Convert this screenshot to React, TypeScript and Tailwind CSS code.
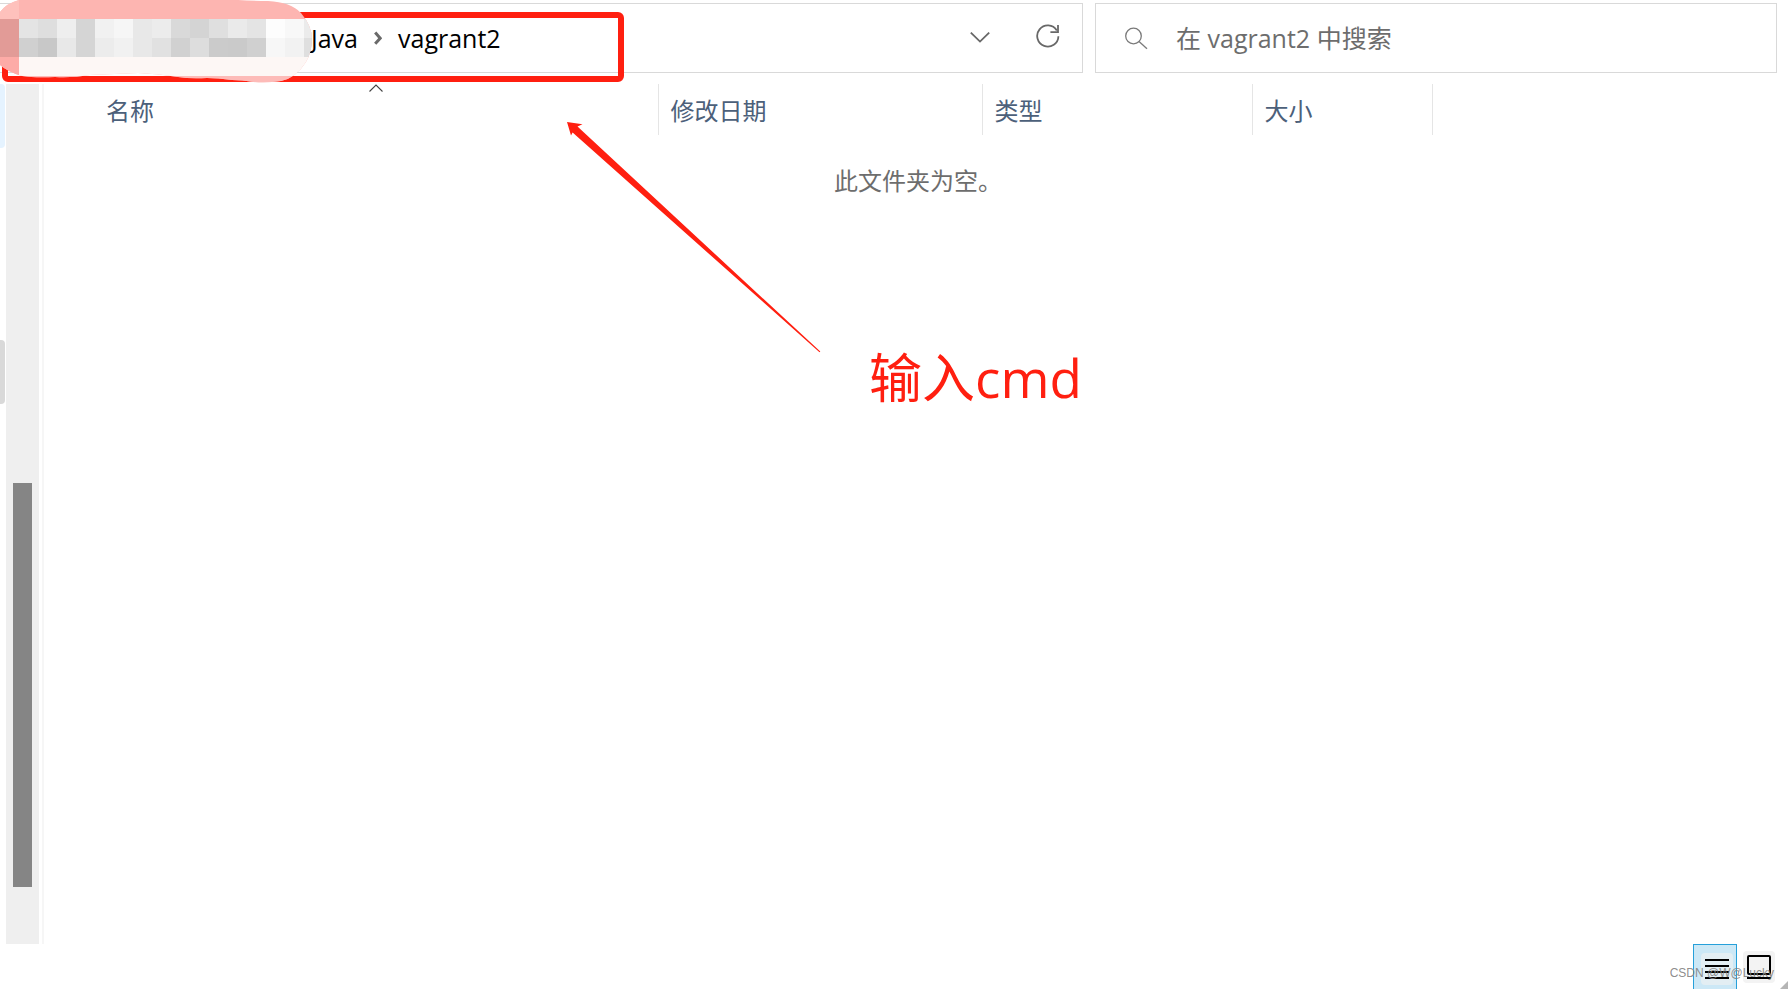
import { useState } from 'react'
import { clsx } from 'clsx'

const COLUMNS = [
  { label: '名称', width: 'w-[614px]', pad: 'pl-[62px]', sorted: true },
  { label: '修改日期', width: 'w-[324px]', pad: 'pl-3', sorted: false },
  { label: '类型', width: 'w-[270px]', pad: 'pl-3', sorted: false },
  { label: '大小', width: 'w-[180px]', pad: 'pl-3', sorted: false },
]

// 19px mosaic cells, two rows
const MOSAIC = [
  ['#e4e4e4', '#dedede', '#eeeeee', '#d5d5d5', '#f1f1f1', '#f6f6f6', '#e8e8e8', '#ececec', '#d9d9d9', '#d4d4d4', '#dfdfdf', '#eaeaea', '#e4e4e4', '#fdfdfd', '#f8f8f8', '#ebebeb'],
  ['#d0d0d0', '#c8c8c8', '#e8e8e8', '#d5d5d5', '#ececec', '#f1f1f1', '#e8e8e8', '#e1e1e1', '#d1d1d1', '#dddddd', '#cbcbcb', '#cacaca', '#d0d0d0', '#f7f7f7', '#f2f2f2', '#dfdfdf'],
]

function AddressBar() {
  return (
    <nav
      aria-label="地址"
      className="flex items-center border border-l-0 border-[#d9d9d9] pl-[311px] pr-[14px] text-[25px]"
    >
      <a href="#java" className="text-black">Java</a>
      <svg className="mx-4 h-4 w-2" viewBox="0 0 8 16" fill="none" stroke="#6a6a6a" strokeWidth="3">
        <path d="M1.2 2.6 6.2 8.2 1.2 13.8" />
      </svg>
      <a href="#vagrant2" className="text-black">vagrant2</a>
      <div className="ml-auto flex items-center gap-7">
        <button aria-label="历史记录" className="flex size-10 items-center justify-center">
          <svg className="h-3 w-5" viewBox="0 0 20 12" fill="none" stroke="#686868" strokeWidth="1.8">
            <path d="M.8 .6 10 9.6 19.2 .6" />
          </svg>
        </button>
        <button aria-label="刷新" className="flex size-10 items-center justify-center pb-1">
          <svg className="size-6" viewBox="0 0 24 24" fill="none" stroke="#686868" strokeWidth="1.8">
            <path d="M22.4 12.2A10.6 10.6 0 1 1 20.8 6.4" />
            <path d="M22 1v7.2h-7.6" />
          </svg>
        </button>
      </div>
    </nav>
  )
}

function SearchBox() {
  const [query, setQuery] = useState('')

  return (
    <label className="flex items-center gap-7 border border-[#d9d9d9] pl-7 text-[25px]">
      <svg className="size-6 shrink-0" viewBox="0 0 24 24" fill="none" stroke="#7a7a7a" strokeWidth="1.3">
        <circle cx="9.5" cy="10" r="7.8" />
        <path d="M15 15.6 23 22.8" />
      </svg>
      <input
        aria-label="搜索"
        value={query}
        onChange={e => setQuery(e.target.value)}
        placeholder="在 vagrant2 中搜索"
        className="min-w-0 flex-1 outline-none placeholder:text-[#6d6d6d]"
      />
    </label>
  )
}

function FileTable() {
  return (
    <table className="h-fit w-full table-fixed text-left">
      <thead>
        <tr>
          {COLUMNS.map(col => (
            <th key={col.label} className={clsx('relative h-[51px] border-r border-[#e5e5e5] p-0 font-normal', col.width)}>
              <button className={clsx('block w-full pt-0.5 text-left text-[#4c607a]', col.pad)}>{col.label}</button>
              {col.sorted && (
                <svg className="absolute top-0 left-[324px] h-2 w-4" viewBox="0 0 16 8" fill="none" stroke="#444" strokeWidth="1.1">
                  <path d="M1.5 7.5 8 1 14.5 7.5" />
                </svg>
              )}
            </th>
          ))}
          <th className="p-0" />
        </tr>
      </thead>
      <tbody>
        <tr>
          <td colSpan={5} className="pt-[30px] pl-1 text-center text-[#6d6d6d]">此文件夹为空。</td>
        </tr>
      </tbody>
    </table>
  )
}

function Redaction() {
  return (
    <svg className="absolute top-0 left-0 h-[84px] w-[320px]" viewBox="0 0 320 84">
      <defs>
        <clipPath id="blob">
          <path d="M0 12Q7 3 19 0H238Q252 1 268 1Q291 2 301 13Q312 26 312 39Q312 52 306 62Q296 78 281 81Q268 83 254 82Q242 80 232 80Q218 78 207 78Q190 79 178 77Q160 74 138 73Q115 74 90 75Q72 78 55 77Q35 78 22 76Q8 72 0 65Z" />
        </clipPath>
      </defs>
      <g clipPath="url(#blob)" shapeRendering="crispEdges">
        <rect width="320" height="84" fill="#fdb5b1" />
        <rect width="19" height="19" fill="#fec1bc" />
        <rect y="19" width="19" height="38" fill="#e29b97" />
        <rect y="57" width="19" height="20" fill="#fdaba7" />
        <rect x="19" y="57" width="301" height="19" fill="#fdf7f5" />
        {MOSAIC.map((row, r) =>
          row.map((fill, c) => (
            <rect key={`${r}-${c}`} x={19 + c * 19} y={19 + r * 19} width="19" height="19" fill={fill} />
          ))
        )}
        <rect x="19" y="76" width="301" height="8" fill="#fdbbb8" />
      </g>
    </svg>
  )
}

function Annotations() {
  return (
    <div className="pointer-events-none absolute inset-0 overflow-hidden">
      <div className="absolute top-3 left-[2px] h-[70px] w-[622px] rounded-md border-6 border-[#ff1f10]" />
      <Redaction />
      <svg className="absolute top-[120px] left-[564px] h-[236px] w-[260px]" viewBox="564 120 260 236">
        <path d="M567 122 582.5 124.3 577.5 126.6 820.3 351.6 819.5 352.3 572.6 132.4 571 135.5Z" fill="#ff1f10" />
      </svg>
      <p className="absolute top-[340px] left-[869px] text-[53px] leading-[76px] text-[#ff1f10]">输入cmd</p>
    </div>
  )
}

function StatusBar() {
  const [view, setView] = useState('details')
  const active = 'border border-b-0 border-[#26a0da] bg-[#cce8f6]'

  return (
    <footer className="relative flex h-[45px] justify-end pr-[7px]">
      <button
        aria-label="详细信息"
        onClick={() => setView('details')}
        className={clsx('flex w-11 items-center justify-center pt-1 pl-1', view === 'details' && active)}
      >
        <svg className="size-8" viewBox="0 0 32 32" stroke="#000" strokeWidth="2">
          <rect width="32" height="32" rx="4" fill="#e3eef3" stroke="none" />
          <path d="M4 7h24M4 13h24M4 19h24M4 25h24" />
        </svg>
      </button>
      <button
        aria-label="大缩略图"
        onClick={() => setView('tiles')}
        className={clsx('flex w-11 items-center justify-center', view === 'tiles' && active)}
      >
        <svg className="size-8" viewBox="0 0 32 32" stroke="#000" strokeWidth="2">
          <rect width="32" height="32" rx="4" fill="#f3f3f3" stroke="none" />
          <rect x="5" y="5" width="22" height="18" rx="1" fill="none" />
          <path d="M4 27h24" />
        </svg>
      </button>
      <span className="absolute right-[14px] bottom-2 font-['Liberation_Sans',sans-serif] text-xs leading-4 text-[#808080]/90">
        CSDN @W@Lucky
      </span>
      <svg className="absolute right-0 bottom-0 size-2" viewBox="0 0 8 8">
        <path d="M8 0v8H0Z" fill="#b5b5b5" />
      </svg>
    </footer>
  )
}

export default function App() {
  return (
    <div className="relative flex min-h-screen flex-col bg-white font-['Open_Sans','Noto_Sans_CJK_SC',sans-serif] text-2xl leading-8">
      <header className="grid h-[73px] grid-cols-[27fr_17fr] gap-3 pt-[3px] pr-[11px]">
        <AddressBar />
        <SearchBox />
      </header>
      <main className="flex flex-1 pt-[11px]">
        {/* Edge of the folder tree */}
        <div className="mr-px w-[5px]">
          <div className="h-16 rounded-r-sm bg-[#e5f3ff]" />
          <div className="mt-48 h-16 rounded-r-sm bg-[#d9d9d9]" />
        </div>
        <div className="w-[33px] bg-[#efefef] pt-[399px]">
          <div className="mx-auto h-[404px] w-[19px] bg-[#858585]" />
        </div>
        <div className="ml-[3px] w-[2px] bg-[#f6f6f6]" />
        <section className="flex-1">
          <FileTable />
        </section>
      </main>
      <StatusBar />
      <Annotations />
    </div>
  )
}
